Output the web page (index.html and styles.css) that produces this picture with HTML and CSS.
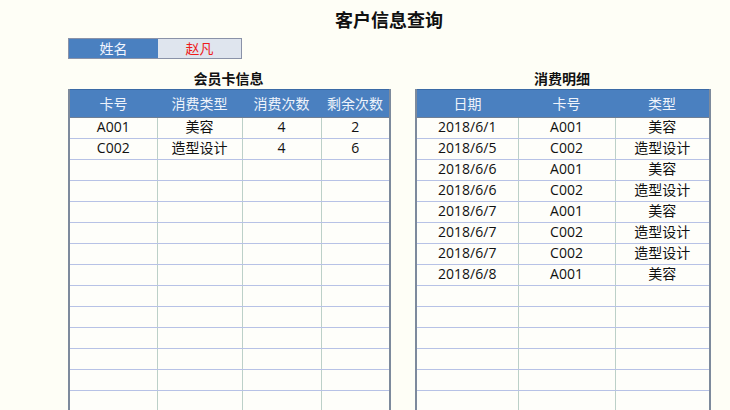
FILE: index.html
```html
<!DOCTYPE html>
<html lang="zh">
<head>
<meta charset="utf-8">
<link rel="stylesheet" href="styles.css">
</head>
<body>
<div class="page">
  <h1 class="title">客户信息查询</h1>
  <div class="namebox">
    <div class="name-label">姓名</div>
    <div class="name-value">赵凡</div>
  </div>
  <div class="tables">
    <section class="block left">
      <h2 class="caption">会员卡信息</h2>
      <table class="grid">
        <colgroup><col style="width:88px"><col style="width:85px"><col style="width:79px"><col style="width:69px"></colgroup>
        <thead><tr><th>卡号</th><th>消费类型</th><th>消费次数</th><th>剩余次数</th></tr></thead>
        <tbody>
          <tr><td>A001</td><td>美容</td><td>4</td><td>2</td></tr>
          <tr><td>C002</td><td>造型设计</td><td>4</td><td>6</td></tr>
          <tr><td></td><td></td><td></td><td></td></tr>
          <tr><td></td><td></td><td></td><td></td></tr>
          <tr><td></td><td></td><td></td><td></td></tr>
          <tr><td></td><td></td><td></td><td></td></tr>
          <tr><td></td><td></td><td></td><td></td></tr>
          <tr><td></td><td></td><td></td><td></td></tr>
          <tr><td></td><td></td><td></td><td></td></tr>
          <tr><td></td><td></td><td></td><td></td></tr>
          <tr><td></td><td></td><td></td><td></td></tr>
          <tr><td></td><td></td><td></td><td></td></tr>
          <tr><td></td><td></td><td></td><td></td></tr>
          <tr><td></td><td></td><td></td><td></td></tr>
        </tbody>
      </table>
    </section>
    <section class="block right">
      <h2 class="caption">消费明细</h2>
      <table class="grid">
        <colgroup><col style="width:102px"><col style="width:97px"><col style="width:95px"></colgroup>
        <thead><tr><th>日期</th><th>卡号</th><th>类型</th></tr></thead>
        <tbody>
          <tr><td>2018/6/1</td><td>A001</td><td>美容</td></tr>
          <tr><td>2018/6/5</td><td>C002</td><td>造型设计</td></tr>
          <tr><td>2018/6/6</td><td>A001</td><td>美容</td></tr>
          <tr><td>2018/6/6</td><td>C002</td><td>造型设计</td></tr>
          <tr><td>2018/6/7</td><td>A001</td><td>美容</td></tr>
          <tr><td>2018/6/7</td><td>C002</td><td>造型设计</td></tr>
          <tr><td>2018/6/7</td><td>C002</td><td>造型设计</td></tr>
          <tr><td>2018/6/8</td><td>A001</td><td>美容</td></tr>
          <tr><td></td><td></td><td></td></tr>
          <tr><td></td><td></td><td></td></tr>
          <tr><td></td><td></td><td></td></tr>
          <tr><td></td><td></td><td></td></tr>
          <tr><td></td><td></td><td></td></tr>
          <tr><td></td><td></td><td></td></tr>
        </tbody>
      </table>
    </section>
  </div>
</div>
</body>
</html>
```

FILE: styles.css
```css
* { box-sizing: border-box; }
html, body {
  margin: 0;
  padding: 0;
  background: #fefef6;
  overflow: hidden;
}
body {
  font-family: "Open Sans", "Noto Sans CJK SC", sans-serif;
  color: #111;
  width: 730px;
  height: 410px;
}
.page {
  width: 642px;
  margin-left: 68px;
  padding-top: 7px;
}
.title {
  margin: 0;
  height: 24px;
  line-height: 24px;
  font-family: "Noto Sans CJK SC", sans-serif;
  font-size: 18px;
  font-weight: bold;
  text-align: center;
  color: #111;
}
.namebox {
  display: flex;
  margin-top: 7px;
  height: 21px;
  width: 174px;
  border: 1px solid #8a92a8;
}
.name-label {
  width: 89px;
  background: #4a80c0;
  color: #f2f6ff;
  font-size: 14px;
  line-height: 19px;
  text-align: center;
}
.name-value {
  flex: 1;
  background: #dfe5ee;
  color: #ee1c1c;
  font-size: 14px;
  line-height: 19px;
  text-align: center;
}
.tables {
  display: flex;
  gap: 26px;
  margin-top: 9px;
}
.block.left { width: 321px; }
.block.right { width: 294px; }
.caption {
  margin: 0;
  height: 21px;
  line-height: 21px;
  font-family: "Noto Sans CJK SC", sans-serif;
  font-size: 14px;
  font-weight: bold;
  text-align: center;
  color: #111;
}
.grid {
  border-collapse: collapse;
  table-layout: fixed;
  width: 100%;
  border-left: 2px solid #7d8a9c;
  border-right: 2px solid #7d8a9c;
}
.grid th {
  height: 28px;
  line-height: 26px;
  background: #4a80c0;
  color: #eef3fb;
  font-weight: normal;
  font-size: 14px;
  padding: 0;
  text-align: center;
  border-top: 1px solid #3b6aa6;
  border-bottom: 1px solid #6f7f95;
}
.grid td {
  height: 21px;
  padding: 0 0 2px 0;
  font-size: 14px;
  line-height: 18px;
  text-align: center;
  background: #fefefa;
  border-bottom: 1px solid #b7c2e6;
  border-left: 1px solid #bcd0c8;
  color: #111;
}
.grid td:first-child { border-left: none; }
```
